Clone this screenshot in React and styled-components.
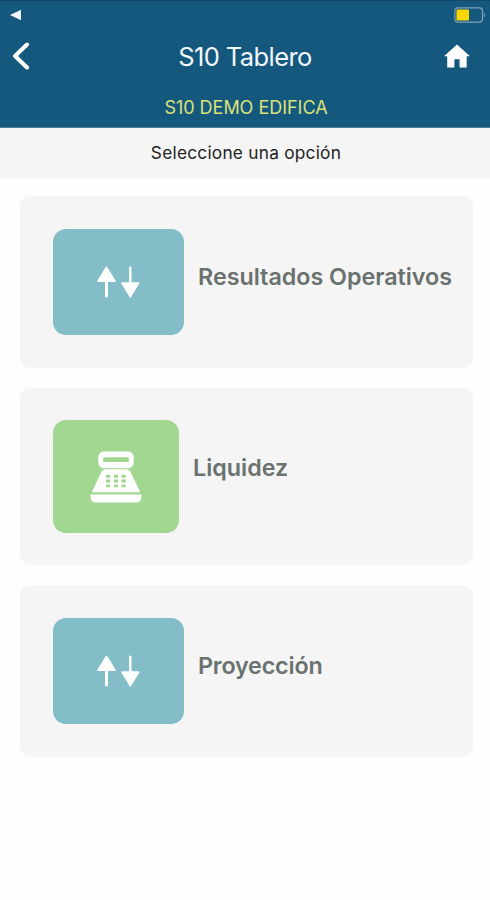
import React from 'react';
import styled, { createGlobalStyle } from 'styled-components';

const GlobalStyle = createGlobalStyle`
  * {
    box-sizing: border-box;
  }

  body {
    margin: 0;
    background-color: #fefefe;
    font-family: Inter, Roboto, 'Liberation Sans', sans-serif;
  }
`;

const Screen = styled.div`
  display: flex;
  flex-direction: column;
  width: 490px;
  height: 900px;
  overflow: hidden;
`;

const Header = styled.header`
  display: flex;
  flex-direction: column;
  height: 128px;
  background-color: #15587e;
  border-top: 1px solid #124866;
  border-bottom: 1px solid #4f7f9b;
`;

const StatusBar = styled.div`
  display: flex;
  justify-content: space-between;
  align-items: center;
  height: 27px;
  padding: 0 4px 0 10px;
`;

const NavBar = styled.div`
  display: grid;
  grid-template-columns: 60px 1fr 60px;
  align-items: center;
  height: 55px;
`;

const NavButton = styled.button`
  display: flex;
  justify-content: ${({ $end }) => ($end ? 'flex-end' : 'flex-start')};
  padding: ${({ $end }) => ($end ? '0 20px 0 0' : '0 0 0 12px')};
  border: none;
  background: none;
  cursor: pointer;
`;

const Title = styled.h1`
  margin: 0;
  padding-top: 3px;
  font-size: 25.5px;
  font-weight: 400;
  line-height: 30px;
  letter-spacing: -0.6px;
  text-align: center;
  white-space: nowrap;
  color: #f2f7fb;
`;

const Company = styled.div`
  margin-top: 14px;
  padding-left: 2px;
  font-size: 18px;
  line-height: 22px;
  letter-spacing: -0.02px;
  text-align: center;
  color: #dbe277;
`;

const Prompt = styled.div`
  height: 51px;
  padding: 14px 0 0 2px;
  font-size: 17.3px;
  line-height: 22px;
  letter-spacing: 0.23px;
  text-align: center;
  color: #222;
  background-color: #f5f5f5;
`;

const Menu = styled.main`
  display: flex;
  flex-direction: column;
  gap: 20px;
  padding: 17px 17.5px 0 20px;
`;

const Card = styled.section`
  display: flex;
  align-items: flex-start;
  gap: 14px;
  height: ${({ $height }) => $height}px;
  padding: ${({ $top }) => $top}px 0 0 33px;
  border-radius: 10px;
  background-color: #f5f5f5;
`;

const Tile = styled.div`
  display: flex;
  flex-shrink: 0;
  justify-content: center;
  align-items: center;
  width: ${({ $width }) => $width}px;
  height: ${({ $height }) => $height}px;
  border-radius: 13px;
  background-color: ${({ $color }) => $color};
`;

const CardTitle = styled.h2`
  margin: 33px 0 0;
  font-size: 23.3px;
  font-weight: 600;
  line-height: 30px;
  letter-spacing: ${({ $spacing }) => $spacing}px;
  white-space: nowrap;
  color: #69726f;
`;

const BackMark = () => (
  <svg width="11" height="12" viewBox="0 0 11 12">
    <path d="M0 6 L11 0.8 V11.2 Z" fill="#f4f8fb" />
  </svg>
);

const Battery = () => (
  <svg width="32" height="16" viewBox="0 0 32 16">
    <rect x="0.9" y="0.9" width="27.6" height="14.2" rx="3" fill="none" stroke="#7fa0b5" strokeWidth="1.2" />
    <rect x="2.5" y="2.6" width="12.5" height="10.8" rx="1.2" fill="#fdd500" />
    <path d="M29.8 5 Q32 8 29.8 11 Z" fill="#7fa0b5" />
  </svg>
);

const ChevronIcon = () => (
  <svg width="18" height="28" viewBox="0 0 18 28">
    <path d="M15 2.5 L3 14 L15 25.5" fill="none" stroke="#fff" strokeWidth="4" strokeLinecap="round" strokeLinejoin="round" />
  </svg>
);

const HomeIcon = () => (
  <svg width="26" height="24" viewBox="0 0 26 24">
    <path d="M13 0.5 L26 12.3 H22.7 V23.5 H15.6 V15.2 H10.4 V23.5 H3.2 V12.3 H0 Z" fill="#fff" />
  </svg>
);

const ArrowsIcon = () => (
  <svg width="46" height="32" viewBox="0 0 46 32">
    <g fill="#fff" stroke="#fff" strokeLinejoin="round">
      <path d="M10.5 1.2 L19.1 15.2 H1.9 Z" strokeWidth="1.4" />
      <path d="M10.5 15 V30" strokeWidth="3" strokeLinecap="round" />
      <path d="M34.3 31 L25.7 17 H42.9 Z" strokeWidth="1.4" />
      <path d="M34.3 17 V1.7" strokeWidth="2.4" strokeLinecap="round" />
    </g>
  </svg>
);

const RegisterIcon = ({ color }) => (
  <svg width="52" height="52" viewBox="0 0 52 52">
    <rect x="8.3" y="0.5" width="35.4" height="16.8" rx="5.5" fill="#fff" />
    <rect x="13.2" y="6.2" width="25.6" height="4.8" fill={color} />
    <path d="M15.5 18.3 H36.5 Q39.2 18.3 40.5 20.8 L50.3 41.3 H1.7 L11.5 20.8 Q12.8 18.3 15.5 18.3 Z" fill="#fff" />
    {[23.8, 28.6, 33.4].map((y) =>
      [16, 23.8, 31.4].map((x) => (
        <rect key={`${x}-${y}`} x={x} y={y} width="4.4" height="2.9" rx="0.6" fill={color} />
      ))
    )}
    <path d="M0.5 43.6 H51.5 V45.5 Q51.5 51.5 46 51.5 H6 Q0.5 51.5 0.5 45.5 Z" fill="#fff" />
  </svg>
);

const options = [
  { title: 'Resultados Operativos', icon: ArrowsIcon, color: '#82bdc8', width: 131, height: 106, cardHeight: 172, top: 33, spacing: -0.02 },
  { title: 'Liquidez', icon: RegisterIcon, color: '#a1d791', width: 126, height: 112.5, cardHeight: 177.3, top: 32.4, spacing: 0 },
  { title: 'Proyección', icon: ArrowsIcon, color: '#82bdc8', width: 131, height: 106, cardHeight: 172, top: 32.7, spacing: -0.17 },
];

const App = () => (
  <>
    <GlobalStyle />
    <Screen>
      <Header>
        <StatusBar>
          <BackMark />
          <Battery />
        </StatusBar>
        <NavBar>
          <NavButton aria-label="Volver">
            <ChevronIcon />
          </NavButton>
          <Title>S10 Tablero</Title>
          <NavButton $end aria-label="Inicio">
            <HomeIcon />
          </NavButton>
        </NavBar>
        <Company>S10 DEMO EDIFICA</Company>
      </Header>
      <Prompt>Seleccione una opción</Prompt>
      <Menu>
        {options.map(({ title, icon: Icon, color, width, height, cardHeight, top, spacing }) => (
          <Card key={title} $height={cardHeight} $top={top}>
            <Tile $width={width} $height={height} $color={color}>
              <Icon color={color} />
            </Tile>
            <CardTitle $spacing={spacing}>{title}</CardTitle>
          </Card>
        ))}
      </Menu>
    </Screen>
  </>
);

export default App;
